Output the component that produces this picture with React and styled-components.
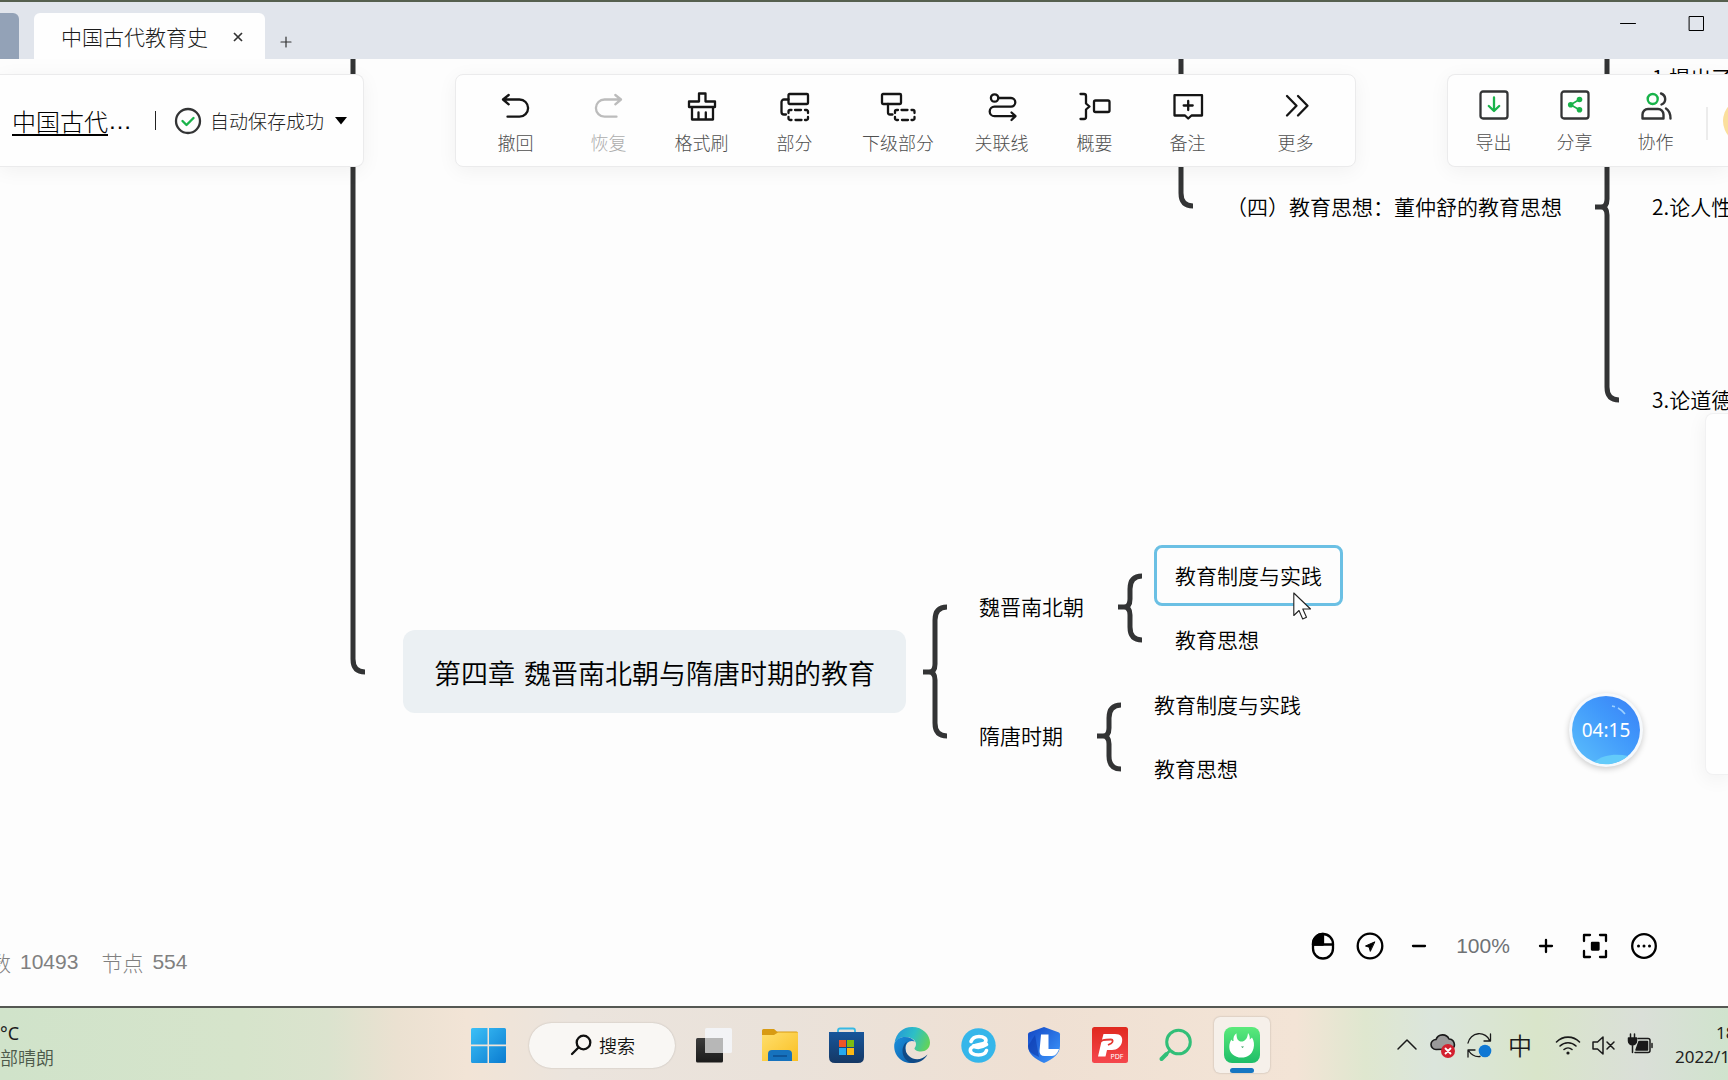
import React from 'react'
import styled, { createGlobalStyle } from 'styled-components'

const INK = '#151515'
const LINE = '#333435'
const GREEN = '#19b34a'

const GlobalStyle = createGlobalStyle`
    * {
        box-sizing: border-box;
    }

    body {
        margin: 0;
        overflow: hidden;
        background: #fdfdfd;
        color: #000;
        font-family: 'Noto Sans CJK SC', sans-serif;
        font-weight: 350;
    }

    button {
        padding: 0;
        border: 0;
        background: none;
        color: inherit;
        font: inherit;
        cursor: pointer;
    }

    svg {
        display: block;
        flex: none;
        overflow: visible;
    }
`

const Page = styled.div`
    display: flex;
    flex-direction: column;
    min-height: 100vh;
    overflow: hidden;
`

/* window frame */

const TabBar = styled.header`
    display: flex;
    align-items: flex-end;
    height: 59px;
    border-top: 2px solid #56604f;
    background: #e1e5ec;
`

const PinnedTab = styled.button`
    width: 19px;
    height: 46px;
    margin-right: 15px;
    border-radius: 0 6px 0 0;
    background: #93a2b7;
`

const Tab = styled.div`
    display: flex;
    align-items: center;
    justify-content: space-between;
    width: 231px;
    height: 46px;
    padding: 0 20px 0 27px;
    border-radius: 6px 6px 0 0;
    background: #fefefe;
    color: #1c1c1c;
    font-weight: 300;
    font-size: 21px;
    line-height: 30px;
`

const TabButton = styled.button`
    display: grid;
    place-items: center;
    width: 14px;
    height: 34px;
    color: #333;
`

const NewTabButton = styled(TabButton)`
    margin-left: 14px;
`

const WindowButtons = styled.div`
    display: flex;
    align-self: flex-start;
    gap: 52px;
    margin-left: auto;
    padding: 13px 24px 0 0;
`

/* canvas */

const Canvas = styled.main`
    position: relative;
    flex: 1;
    overflow: hidden;
    background: #fdfdfd;
`

const Links = styled.svg`
    position: absolute;
    top: 0;
    left: 0;
    width: 100%;
    height: 100%;
    fill: none;
    stroke: ${LINE};
    stroke-width: 5;
`

const Node = styled.div`
    position: absolute;
    left: ${p => p.$x}px;
    top: ${p => p.$y}px;
    font-size: 21px;
    line-height: 30px;
    white-space: nowrap;
`

const TopicNode = styled(Node)`
    display: flex;
    gap: 9px;
    padding: 23px 31px 20px;
    border-radius: 12px;
    background: #ebf0f3;
    font-size: 27px;
    line-height: 40px;
`

const SelectedNode = styled(Node)`
    padding: 12px 18px 13px;
    border: 3px solid #6bc0e4;
    border-radius: 8px;
`

const Cursor = styled.svg`
    position: absolute;
    left: 1293px;
    top: 533px;
`

/* floating panels */

const TopPanels = styled.div`
    position: absolute;
    top: 15px;
    left: 0;
    right: 0;
    display: flex;
    gap: 91px;
`

const Panel = styled.section`
    display: flex;
    flex: none;
    height: 93px;
    border: 1px solid #ebebec;
    border-radius: 8px;
    background: #fefefe;
    box-shadow: 0 4px 20px rgba(0, 0, 0, 0.05);
`

const FilePanel = styled(Panel)`
    align-items: center;
    width: 364px;
    padding-left: 12px;
    border-left: 0;
    border-radius: 0 8px 8px 0;
`

const ToolPanel = styled(Panel)`
    padding: 17px 13px 0;
`

const SharePanel = styled(Panel)`
    flex: 1;
    min-width: 0;
    padding: 15px 0 0 5px;
    overflow: hidden;
    border-right: 0;
    border-radius: 8px 0 0 8px;
`

const FileName = styled.a`
    display: flex;
    color: #000;
    font-weight: 300;
    font-size: 24px;
    line-height: 36px;
    text-decoration: none;

    span {
        text-decoration: underline;
        text-decoration-thickness: 2px;
        text-underline-offset: 3px;
    }

    i {
        font-family: 'Liberation Sans', sans-serif;
        font-style: normal;
    }
`

const Separator = styled.i`
    width: 1px;
    height: 19px;
    margin: 0 19px 0 23px;
    background: #222;
`

const SaveState = styled.button`
    display: flex;
    align-items: center;
    color: #222;
    font-weight: 300;
    font-size: 19px;
    line-height: 28px;

    span {
        margin: 0 11px 0 9px;
    }
`

const Tool = styled.button`
    display: flex;
    flex: none;
    flex-direction: column;
    align-items: center;
    align-self: flex-start;
    gap: ${p => p.$gap || 7}px;
    width: ${p => p.$width || 93}px;
    margin-left: ${p => (p.$apart ? 15 : 0)}px;
    color: ${p => (p.disabled ? '#bcbcbc' : INK)};
    font-weight: 300;
    font-size: 18px;
    line-height: 26px;

    span {
        color: ${p => (p.disabled ? '#adadad' : '#4f4f4f')};
    }
`

const PanelDivider = styled.i`
    flex: none;
    width: 2px;
    height: 33px;
    margin: 17px 15px 0 10px;
    background: #ececec;
`

const Avatar = styled.button`
    flex: none;
    width: 46px;
    height: 46px;
    margin-top: 8px;
    border-radius: 50%;
    background: #fbdf9d;
`

const SidePanel = styled.aside`
    position: absolute;
    right: 0;
    top: 354px;
    width: 23px;
    height: 362px;
    border: 1px solid #f1f1f2;
    border-right: 0;
    border-radius: 8px 0 0 8px;
    background: #fefefe;
    box-shadow: 0 4px 20px rgba(0, 0, 0, 0.06);
`

const Timer = styled.button`
    position: absolute;
    right: 85px;
    bottom: 239px;
    display: grid;
    width: 74px;
    height: 74px;
    border-radius: 50%;
    background: #f6f9fc;
    box-shadow: 0 2px 6px rgba(0, 0, 0, 0.2);

    > * {
        grid-area: 1 / 1;
        place-self: center;
    }

    span {
        z-index: 1;
        color: #fff;
        font-family: 'Noto Sans', sans-serif;
        font-weight: 400;
        font-size: 19px;
        line-height: 28px;
    }
`

const Stats = styled.div`
    position: absolute;
    left: -10px;
    bottom: 29px;
    display: flex;
    gap: 23px;
    color: #808080;
    font-weight: 300;
    font-size: 21px;
    line-height: 30px;

    span {
        display: flex;
        gap: 9px;
    }
`

const Count = styled.b`
    font-family: 'Liberation Sans', sans-serif;
    font-weight: 400;
`

const ZoomBar = styled.div`
    position: absolute;
    right: 60px;
    bottom: 45px;
    display: flex;
    align-items: center;
    color: #000;
`

const ZoomButton = styled.button`
    display: grid;
    place-items: center;
    width: ${p => p.$width || 48}px;
    height: 30px;
`

const ZoomValue = styled.output`
    width: 78px;
    color: #6f7275;
    font-family: 'Liberation Sans', sans-serif;
    font-size: 21px;
    line-height: 30px;
    text-align: center;
`

/* taskbar */

const Taskbar = styled.footer`
    display: grid;
    grid-template-columns: 1fr auto 1fr;
    align-items: center;
    height: 74px;
    padding-top: 2px;
    border-top: 2px solid #555853;
    background: linear-gradient(
        90deg,
        #d0e3ca 0%,
        #d6e4cb 14%,
        #dbe3ce 19%,
        #ebe1d1 23%,
        #f2e4d6 27%,
        #ebe4dd 33%,
        #eae2da 45%,
        #efe0d3 60%,
        #f3e4d6 75%,
        #dfe7cf 79%,
        #dbe5dc 83%,
        #d9e5ca 89%,
        #dadfd8 95%,
        #d0e3cd 100%
    );
`

const Weather = styled.button`
    justify-self: start;
    color: #4d5a4b;
    font-size: 18px;
    line-height: 24px;
    text-align: left;

    b {
        display: block;
        color: #1c1c1c;
        font-family: 'Noto Sans', sans-serif;
        font-weight: 400;
    }
`

const Apps = styled.nav`
    display: flex;
    align-items: center;
    padding-left: 2px;
`

const AppButton = styled.button`
    position: relative;
    display: grid;
    place-items: center;
    width: 56px;
    height: 56px;
    margin: 0 5px;
    border-radius: 6px;
    background: ${p => (p.$active ? '#f6f0ea' : 'none')};
    box-shadow: ${p => (p.$active ? '0 0 2px rgba(0, 0, 0, 0.25)' : 'none')};

    &::after {
        content: '';
        position: absolute;
        bottom: 0;
        display: ${p => (p.$active ? 'block' : 'none')};
        width: 24px;
        height: 5px;
        border-radius: 3px;
        background: #1676c2;
    }
`

const SearchBox = styled.button`
    display: flex;
    align-items: center;
    justify-content: center;
    gap: 8px;
    width: 146px;
    height: 45px;
    margin: 0 6px 0 8px;
    padding-left: 2px;
    border-radius: 23px;
    background: #f9f7f4;
    box-shadow: 0 0 2px rgba(0, 0, 0, 0.2);
    color: #111;
    font-size: 18px;
    line-height: 26px;
`

const Tray = styled.div`
    display: flex;
    align-items: center;
    justify-self: end;
    color: #1a1a1a;
`

const TrayButton = styled.button`
    display: grid;
    place-items: center;
    width: 36px;
    height: 40px;
    margin-right: ${p => p.$after || 0}px;
    font-size: 24px;
    line-height: 36px;
`

const Clock = styled.button`
    width: 53px;
    margin-left: 17px;
    overflow: hidden;
    color: #222;
    font-family: 'Noto Sans', sans-serif;
    font-weight: 400;
    font-size: 17px;
    line-height: 24px;
    text-align: left;
    white-space: nowrap;

    span {
        display: block;
        padding-left: 41px;
    }
`

const Icon = ({ size = 30, children, ...rest }) => (
    <svg
        width={size}
        height={size}
        viewBox={`0 0 ${size} ${size}`}
        fill="none"
        stroke="currentColor"
        strokeWidth="2.3"
        strokeLinecap="round"
        strokeLinejoin="round"
        aria-hidden="true"
        {...rest}
    >
        {children}
    </svg>
)

const tools = [
    {
        label: '撤回',
        icon: <path d="M2 7.5h16.5a8.6 8.6 0 0 1 0 17.2H6.5M7.700 3 2 7.500l5.700 4.800" />,
    },
    {
        label: '恢复',
        disabled: true,
        icon: <path d="M27 7.5H10.5a8.6 8.6 0 0 0 0 17.2h12M21.3 3 27 7.5l-5.7 4.8" />,
    },
    {
        label: '格式刷',
        icon: <path d="M12 9.5v-8h6.5v8H28V15H2V9.5zM5 15v12.5h21V15M11.5 20.5V27M18.8 20.5V27" />,
    },
    {
        label: '部分',
        icon: (
            <>
                <rect x="8.5" y="2" width="19.5" height="10" rx="1" />
                <path d="M8.500 7.500H4A2.500 2.500 0 0 0 1.500 10v10A2.500 2.500 0 0 0 4 22.500h2" />
                <path d="M8.500 21v-1.500a1.500 1.500 0 0 1 1.500-1.500h1.500M15 18h6M25 18h1.500a1.500 1.500 0 0 1 1.500 1.500V21M28 25v1.500a1.500 1.500 0 0 1-1.500 1.500H25M21.500 28h-6M11.500 28H10a1.500 1.500 0 0 1-1.500-1.500V25" />
            </>
        ),
    },
    {
        label: '下级部分',
        width: 114,
        icon: (
            <>
                <rect x="-1" y="2" width="19" height="10" rx="1" />
                <path d="M5 12v8.500a2 2 0 0 0 2 2h2.500" />
                <path d="M12 21v-1.500a1.500 1.500 0 0 1 1.500-1.500H15M18.500 18h6M28.500 18H30a1.500 1.500 0 0 1 1.500 1.500V21M31.500 25v1.500A1.500 1.500 0 0 1 30 28h-1.500M25 28h-6M15 28h-1.500a1.500 1.500 0 0 1-1.500-1.500V25" />
            </>
        ),
    },
    {
        label: '关联线',
        icon: (
            <>
                <circle cx="7.6" cy="6" r="3.7" />
                <path d="M11.5 6H24a4.3 4.3 0 0 1 0 8.6H7.5a4.8 4.8 0 0 0 0 9.6H28M24.5 20.5l4 3.7-4 3.8" />
            </>
        ),
    },
    {
        label: '概要',
        icon: (
            <>
                <path d="M.5 2H4a2 2 0 0 1 2 2v7.5l3.500 3-3.500 3V25a2 2 0 0 1-2 2H.5" />
                <rect x="14" y="8.5" width="15.5" height="11.5" rx="1.5" />
            </>
        ),
    },
    {
        label: '备注',
        icon: <path d="M1.5 3.2H29v20.300H18.500L15.200 26.500 12 23.500H1.500zM15.200 9v9M10.700 13.500h9" />,
    },
    {
        label: '更多',
        apart: true,
        icon: <path d="m6 4 9.500 9.700L6 23.500M17 4l9.500 9.700-9.500 9.800" />,
    },
]

const shareTools = [
    {
        label: '导出',
        icon: (
            <>
                <rect x="1.5" y="1.5" width="27" height="27" rx="2.5" stroke={LINE} />
                <path d="M15 7.500v13M9.800 16l5.200 5 5.200-5" stroke={GREEN} />
            </>
        ),
    },
    {
        label: '分享',
        icon: (
            <>
                <rect x="1.5" y="1.5" width="27" height="27" rx="2.5" stroke={LINE} />
                <path d="m19.300 9.500-8.600 5.200 8.600 5" stroke={GREEN} strokeWidth="1.6" />
                <g fill={GREEN} stroke="none">
                    <circle cx="19.5" cy="9.5" r="2.8" />
                    <circle cx="10.7" cy="14.7" r="2.8" />
                    <circle cx="19.5" cy="19.8" r="2.8" />
                </g>
            </>
        ),
    },
    {
        label: '协作',
        icon: (
            <g stroke={LINE} strokeWidth="2.4">
                <circle cx="11.7" cy="9" r="5" stroke={GREEN} />
                <path d="M1.500 28.500v-4A5.500 5.500 0 0 1 7 19h10a5.500 5.500 0 0 1 5.500 5.500v4zM20 3.500c5.500 2 5.500 9 .5 11M25 18.500c3 2 4.500 5 4.500 10" />
            </g>
        ),
    },
]

const nodes = [
    { text: '1.提出了', x: 1652, y: 3 },
    { text: '（四）教育思想：董仲舒的教育思想', x: 1226, y: 132 },
    { text: '2.论人性', x: 1652, y: 132 },
    { text: '3.论道德', x: 1652, y: 325 },
    { text: '魏晋南北朝', x: 979, y: 532 },
    { text: '隋唐时期', x: 979, y: 661 },
    { text: '教育思想', x: 1175, y: 565 },
    { text: '教育制度与实践', x: 1154, y: 630 },
    { text: '教育思想', x: 1154, y: 694 },
]

// A brace: tail on the left at `mid`, hooks to the right at top and bottom.
const brace = (x, top, mid, bottom) => [
    `M${x - 12} ${mid}h6q6 0 6-8V${top + 13}q0-13 12-13`,
    `M${x - 12} ${mid}h6q6 0 6 8V${bottom - 13}q0 13 12 13`,
].join('')

const links = [
    'M353 -10V600q0 13 12 13',
    'M1181 -10V134q0 13 12 13',
    brace(1607, -40, 148, 341),
    brace(935, 548, 613, 677),
    brace(1130, 517, 548, 581),
    brace(1109, 646, 677, 710),
]

const StartIcon = () => (
    <svg width="35" height="35" viewBox="0 0 35 35">
        <linearGradient id="start" x1="0" y1="0" x2="1" y2="1">
            <stop offset="0" stopColor="#3cc0f7" />
            <stop offset="1" stopColor="#0a7bd0" />
        </linearGradient>
        <path
            fill="url(#start)"
            d="M1.500 0h15v16.500H0v-15Q0 0 1.500 0zM18 0h15.500Q35 0 35 1.500v15H18zM0 18.200h16.500V35h-15Q0 35 0 33.500zM18 18.200h17v15.300q0 1.500-1.500 1.500H18z"
        />
    </svg>
)

const TaskViewIcon = () => (
    <svg width="36" height="35" viewBox="0 0 36 35">
        <linearGradient id="view" x1="0" y1="0" x2="0" y2="1">
            <stop offset="0" stopColor="#3c3c3c" />
            <stop offset="1" stopColor="#1b1b1b" />
        </linearGradient>
        <rect y="10" width="27" height="24.5" rx="1.5" fill="url(#view)" />
        <rect x="9" y="0" width="27" height="25" rx="1.5" fill="#f4f5f8" opacity=".9" />
        <path d="M9 10h18v15H10.500Q9 25 9 23.500z" fill="#b7b7b7" />
    </svg>
)

const FolderIcon = () => (
    <svg width="36" height="32" viewBox="0 0 36 32">
        <linearGradient id="folder" x1="0" y1="0" x2="1" y2="1">
            <stop offset="0" stopColor="#ffdf6d" />
            <stop offset="1" stopColor="#f9bf22" />
        </linearGradient>
        <path d="M0 1.500Q0 0 1.500 0H12l3 2.500h19.500Q36 2.500 36 4v6H0z" fill="#d89b13" />
        <path d="M0 6h12l4-2.500h20V32H0z" fill="url(#folder)" />
        <path d="M6 32v-7q0-4 4-4h16q4 0 4 4v7z" fill="#1672bd" />
        <path d="M11 27h14" stroke="#0c4e8f" strokeWidth="1.5" />
    </svg>
)

const StoreIcon = () => (
    <svg width="35" height="36" viewBox="0 0 35 36">
        <linearGradient id="store" x1="0" y1="0" x2="0" y2="1">
            <stop offset="0" stopColor="#17569b" />
            <stop offset="1" stopColor="#153865" />
        </linearGradient>
        <path d="M9 6V3.500q0-2 2-2h13q2 0 2 2V6" fill="none" stroke="#37b9e4" strokeWidth="1.8" />
        <path d="M0 5h35v25q0 6-6 6H6q-6 0-6-6z" fill="url(#store)" />
        <path d="M10 13h7v7h-7z" fill="#ef5527" />
        <path d="M18 13h7v7h-7z" fill="#7dbb11" />
        <path d="M10 21h7v7h-7z" fill="#26a9ee" />
        <path d="M18 21h7v7h-7z" fill="#fcb813" />
    </svg>
)

const EdgeIcon = () => (
    <svg width="36" height="36" viewBox="0 0 36 36">
        <linearGradient id="edgeTop" x1="0" y1=".3" x2="1" y2=".6">
            <stop offset="0" stopColor="#2598d8" />
            <stop offset=".5" stopColor="#2dbfc6" />
            <stop offset="1" stopColor="#62d35a" />
        </linearGradient>
        <linearGradient id="edgeLeft" x1="0" y1="0" x2="1" y2="1">
            <stop offset="0" stopColor="#1b8fdc" />
            <stop offset="1" stopColor="#0b5ca8" />
        </linearGradient>
        <path d="M.5 16C2 6 9 0 18 0c11 0 18 8 18 15.500 0 6-4.500 9-9 9-4 0-6.500-1.500-6.500-3 0-1 1.500-1.500 1.500-4.500 0-4-5-7-10.500-7C6 10 2 13 .5 16z" fill="url(#edgeTop)" />
        <path d="M.3 17C2 12 6 10 11 10c4.500 0 8 1.800 9.800 4.500-5-2-9.300 1.500-9.300 7 0 7.500 5 13 9.500 14.200C10 38-1 30 .3 17z" fill="url(#edgeLeft)" />
        <path d="M13.500 14.500c-3 3-3.500 10 1.500 14.500 5.500 5 13 4 18.500-1.500C31 32 26 36 19.500 36 13 36 8.500 30 8.500 24c0-4 2-8 5-9.500z" fill="#104a86" />
    </svg>
)

const BrowserIcon = () => (
    <svg width="35" height="35" viewBox="0 0 35 35">
        <circle cx="17.5" cy="17.5" r="17.2" fill="#35b6ea" />
        <path
            d="M10 13.500C11.500 9.500 15 8.500 18 8.500c5 0 8 2.500 6.500 5.500-1.500 3-13.500 2-15 7-1 4 3 6 8 6 4 0 7-1.500 8-4.500M12.500 18c4 2.500 9 1 13-1.500"
            fill="none"
            stroke="#fff"
            strokeWidth="3.6"
            strokeLinecap="round"
        />
    </svg>
)

const ShieldIcon = () => (
    <svg width="34" height="36" viewBox="0 0 34 36">
        <linearGradient id="shield" x1="0" y1="0" x2="1" y2="1">
            <stop offset="0" stopColor="#1246c4" />
            <stop offset="1" stopColor="#3f9bff" />
        </linearGradient>
        <path d="M17 0 32 5.500q1 .5 1 2V19c0 8-7 13-16 17C8 32 1 27 1 19V7.500q0-1.500 1-2z" fill="url(#shield)" />
        <path d="M1 19 8 8l4 22C5 27 1 24 1 19z" fill="#0e3cae" opacity=".6" />
        <path d="M14 7.500h7.500V22H32c-1 3.500-3.500 7-7 7h-7.500q-5 0-5-5z" fill="#fff" />
    </svg>
)

const PdfIcon = () => (
    <svg width="36" height="36" viewBox="0 0 36 36">
        <linearGradient id="pdf" x1="0" y1="0" x2="0" y2="1">
            <stop offset="0" stopColor="#e0291f" />
            <stop offset="1" stopColor="#f5474d" />
        </linearGradient>
        <rect width="36" height="36" rx="2.5" fill="url(#pdf)" />
        <path d="M11.500 7H23c6 0 8 3.500 7 8s-5 8-10 8h-5l-1.500 6.500H6l3.500-15z" fill="#fff" />
        <path
            d="M7 16.500c2-3.500 5-4 12-4 2 0 2.500 2.500 0 4l-3 1.500"
            fill="none"
            stroke="#e4362f"
            strokeWidth="1.8"
        />
        <text x="18.5" y="31.5" fill="#fff" fontFamily="Noto Sans" fontWeight="400" fontSize="7">PDF</text>
    </svg>
)

const FinderIcon = () => (
    <svg width="34" height="34" viewBox="0 0 34 34" fill="none" stroke="#31bf78" strokeLinecap="round">
        <circle cx="19.5" cy="14" r="11.8" strokeWidth="3" />
        <path d="m2.500 31 5-5" strokeWidth="4" />
        <path d="m7.500 26 3.500-3.500" strokeWidth="2.5" />
    </svg>
)

const MapAppIcon = () => (
    <svg width="36" height="36" viewBox="0 0 36 36">
        <linearGradient id="mapApp" x1="0" y1="0" x2="0" y2="1">
            <stop offset="0" stopColor="#5bea7b" />
            <stop offset="1" stopColor="#1ebd68" />
        </linearGradient>
        <rect width="36" height="36" rx="8" fill="url(#mapApp)" />
        <path
            d="M7.500 12.500c.3 1 1 1.500 2 1.500-.5-3 .5-6 3-7.700 0 4 .5 7 4 8.200 4 .5 7-2.500 7.500-8.500 1.500 2 2 4 1.800 6.500l2.200-2c2 3 2.500 7 1.500 11-1.500 6-6 9.100-12 9.100-7 0-12.200-4.600-12.200-10.600 0-3 .8-5.500 2.200-7.500z"
            fill="#fff"
        />
        <path d="m17 19.500 1.500 1.500 1.500-1.500z" fill="#2c9d5c" />
    </svg>
)

const pinnedApps = [
    { name: '任务视图', icon: <TaskViewIcon /> },
    { name: '文件资源管理器', icon: <FolderIcon /> },
    { name: '应用商店', icon: <StoreIcon /> },
    { name: 'Edge', icon: <EdgeIcon /> },
    { name: '浏览器', icon: <BrowserIcon /> },
    { name: '电脑管家', icon: <ShieldIcon /> },
    { name: 'PDF', icon: <PdfIcon /> },
    { name: '查找', icon: <FinderIcon /> },
    { name: '思维导图', icon: <MapAppIcon />, active: true },
]

const ToolButton = ({ tool, width, gap }) => (
    <Tool $width={tool.width || width} $gap={gap} $apart={tool.apart} disabled={tool.disabled}>
        <Icon>{tool.icon}</Icon>
        <span>{tool.label}</span>
    </Tool>
)

const WindowTabs = () => (
    <TabBar>
        <PinnedTab aria-label="首页" />
        <Tab>
            中国古代教育史
            <TabButton aria-label="关闭">
                <Icon size={10} strokeWidth="1.7" strokeLinecap="butt">
                    <path d="m1 2 8 8M9 2l-8 8" />
                </Icon>
            </TabButton>
        </Tab>
        <NewTabButton aria-label="新建">
            <Icon size={10} strokeWidth="1.2">
                <path d="M5 0v10M0 5h10" />
            </Icon>
        </NewTabButton>
        <WindowButtons>
            <button aria-label="最小化">
                <Icon size={16} stroke="#000" strokeWidth="1">
                    <path d="M.5 8.500h15" />
                </Icon>
            </button>
            <button aria-label="最大化">
                <Icon size={16} stroke="#000" strokeWidth="1" strokeLinejoin="miter">
                    <path d="M1.500 1.500h14v14h-14z" />
                </Icon>
            </button>
        </WindowButtons>
    </TabBar>
)

const MindMap = () => (
    <>
        <Links>
            {links.map(d => <path key={d} d={d} />)}
        </Links>
        {nodes.map(({ text, x, y }) => (
            <Node key={`${x}-${y}`} $x={x} $y={y}>{text}</Node>
        ))}
        <TopicNode $x={403} $y={571}>
            <span>第四章</span>
            <span>魏晋南北朝与隋唐时期的教育</span>
        </TopicNode>
        <SelectedNode $x={1154} $y={486}>教育制度与实践</SelectedNode>
        <Cursor width="19" height="28" viewBox="0 0 19 28" aria-hidden="true">
            <path
                d="M.8 1v22.500l5.200-5 3.700 8.500 3.800-1.700-3.700-8.300h7.700z"
                fill="#fff"
                stroke="#222"
                strokeWidth="1.1"
                strokeLinejoin="round"
            />
        </Cursor>
    </>
)

const TopBar = () => (
    <TopPanels>
        <FilePanel>
            <FileName href="#file"><span>中国古代</span><i>…</i></FileName>
            <Separator />
            <SaveState>
                <Icon size={26}>
                    <circle cx="13" cy="13" r="12" stroke={LINE} />
                    <path d="m7.500 13 4 4 7-7" stroke={GREEN} strokeWidth="2.4" />
                </Icon>
                <span>自动保存成功</span>
                <svg width="12" height="8" viewBox="0 0 12 8">
                    <path d="M0 0h12L6 7.500z" />
                </svg>
            </SaveState>
        </FilePanel>
        <ToolPanel>
            {tools.map(tool => <ToolButton key={tool.label} tool={tool} />)}
        </ToolPanel>
        <SharePanel>
            {shareTools.map(tool => <ToolButton key={tool.label} tool={tool} width={81} gap={8} />)}
            <PanelDivider />
            <Avatar aria-label="账号" />
        </SharePanel>
    </TopPanels>
)

const ZoomControls = () => (
    <ZoomBar>
        <ZoomButton $width={46} aria-label="鼠标">
            <Icon size={26}>
                <path d="M13 1A10 10 0 0 0 3 11.500h10z" fill="currentColor" />
                <rect x="3" y="1" width="20" height="24.5" rx="10" />
                <path d="M3 11.500h20" />
            </Icon>
        </ZoomButton>
        <ZoomButton aria-label="定位">
            <Icon size={26}>
                <circle cx="13" cy="13" r="12.3" />
                <path d="M17.500 9 8.500 13l3.700 1.200 1 3.800z" fill="currentColor" strokeWidth="1" />
            </Icon>
        </ZoomButton>
        <ZoomButton $width={50} aria-label="缩小">
            <Icon size={14}><path d="M1 7h12" /></Icon>
        </ZoomButton>
        <ZoomValue>100%</ZoomValue>
        <ZoomButton aria-label="放大">
            <Icon size={14}><path d="M1 7h12M7 1v12" /></Icon>
        </ZoomButton>
        <ZoomButton $width={50} aria-label="适应窗口">
            <Icon size={26}>
                <path d="M2 8V2h6M18 2h6v6M24 18v6h-6M8 24H2v-6" />
                <rect x="10" y="10" width="6.5" height="6.5" fill="currentColor" />
            </Icon>
        </ZoomButton>
        <ZoomButton aria-label="更多">
            <Icon size={26}>
                <circle cx="13" cy="13" r="11.8" />
                <path d="M7.500 13h.01M13 13h.01M18.500 13h.01" strokeWidth="3" />
            </Icon>
        </ZoomButton>
    </ZoomBar>
)

const SystemTray = () => (
    <Tray>
        <TrayButton aria-label="显示隐藏的图标">
            <Icon size={20} strokeWidth="1.5"><path d="m1 14 9-9 9 9" /></Icon>
        </TrayButton>
        <TrayButton aria-label="云盘">
            <Icon size={26} strokeWidth="1.6">
                <path d="M6 17.500a5 5 0 0 1 0-10 7 7 0 0 1 13-.5 5.500 5.500 0 0 1 3 10z" fill="#9a9a9a" />
                <circle cx="18" cy="19" r="7" fill="#d3202f" stroke="none" />
                <path d="m15.500 16.500 5 5M20.500 16.500l-5 5" stroke="#fff" strokeWidth="1.8" />
            </Icon>
        </TrayButton>
        <TrayButton $after={5} aria-label="更新">
            <Icon size={26} strokeWidth="1.3">
                <path d="M2 11a11.500 11.500 0 0 1 22-2M24.500 2v7H18M2 25v-7h7M2.500 18.500c2.500 4 7 6.500 11.500 6" />
                <circle cx="19" cy="19" r="6.3" fill="#0f78d4" stroke="none" />
            </Icon>
        </TrayButton>
        <TrayButton $after={12}>中</TrayButton>
        <TrayButton aria-label="网络">
            <Icon size={26} strokeWidth="1.6">
                <path d="M1.500 10a16 16 0 0 1 23 0M5 14a11.300 11.300 0 0 1 16 0M9 17.500a6 6 0 0 1 8 0" />
                <circle cx="13" cy="21" r="1.6" fill="currentColor" stroke="none" />
            </Icon>
        </TrayButton>
        <TrayButton aria-label="静音">
            <Icon size={24} strokeWidth="1.5">
                <path d="M1 9h4.500L11 4v17l-5.500-5H1zM15 9l7 7M22 9l-7 7" />
            </Icon>
        </TrayButton>
        <TrayButton aria-label="电池">
            <Icon size={26} strokeWidth="1.5">
                <path d="M11 6.500h10a2 2 0 0 1 2 2v10a2 2 0 0 1-2 2H8" />
                <path d="M12 9.500h8.500v8.500H9zM25 11.500v4" fill="currentColor" />
                <path d="M3.500 2v4M7.500 2v4M1.500 6h8v3a4 4 0 0 1-8 0zM5.500 12v8.500" fill="currentColor" strokeWidth="1.5" />
            </Icon>
        </TrayButton>
        <Clock>
            <span>18</span>
            2022/1
        </Clock>
    </Tray>
)

const App = () => (
    <Page>
        <GlobalStyle />
        <WindowTabs />
        <Canvas>
            <MindMap />
            <TopBar />
            <SidePanel />
            <Timer>
                <svg width="68" height="68" viewBox="0 0 68 68" aria-hidden="true">
                    <linearGradient id="timer" x1="0" y1="1" x2="1" y2="0">
                        <stop offset="0" stopColor="#5cc0fb" />
                        <stop offset=".6" stopColor="#4098fb" />
                        <stop offset="1" stopColor="#3a7ff5" />
                    </linearGradient>
                    <circle cx="34" cy="34" r="34" fill="url(#timer)" />
                    <path d="M22 66c8-7 22-9 34-6a34 34 0 0 1-34 6z" fill="#63cbfa" />
                    <path d="m40 10 3 .8M46 12c3 1.500 5 3.500 7 6" fill="none" stroke="#9cd0ff" strokeWidth="1.6" />
                </svg>
                <span>04:15</span>
            </Timer>
            <Stats>
                <span>数 <Count>10493</Count></span>
                <span>节点 <Count>554</Count></span>
            </Stats>
            <ZoomControls />
        </Canvas>
        <Taskbar>
            <Weather>
                <b>°C</b>
                部晴朗
            </Weather>
            <Apps>
                <AppButton aria-label="开始"><StartIcon /></AppButton>
                <SearchBox>
                    <Icon size={20}>
                        <circle cx="12.5" cy="7.5" r="6.8" />
                        <path d="m1 19 6.500-6.500" />
                    </Icon>
                    搜索
                </SearchBox>
                {pinnedApps.map(app => (
                    <AppButton key={app.name} aria-label={app.name} $active={app.active}>
                        {app.icon}
                    </AppButton>
                ))}
            </Apps>
            <SystemTray />
        </Taskbar>
    </Page>
)

export default App
